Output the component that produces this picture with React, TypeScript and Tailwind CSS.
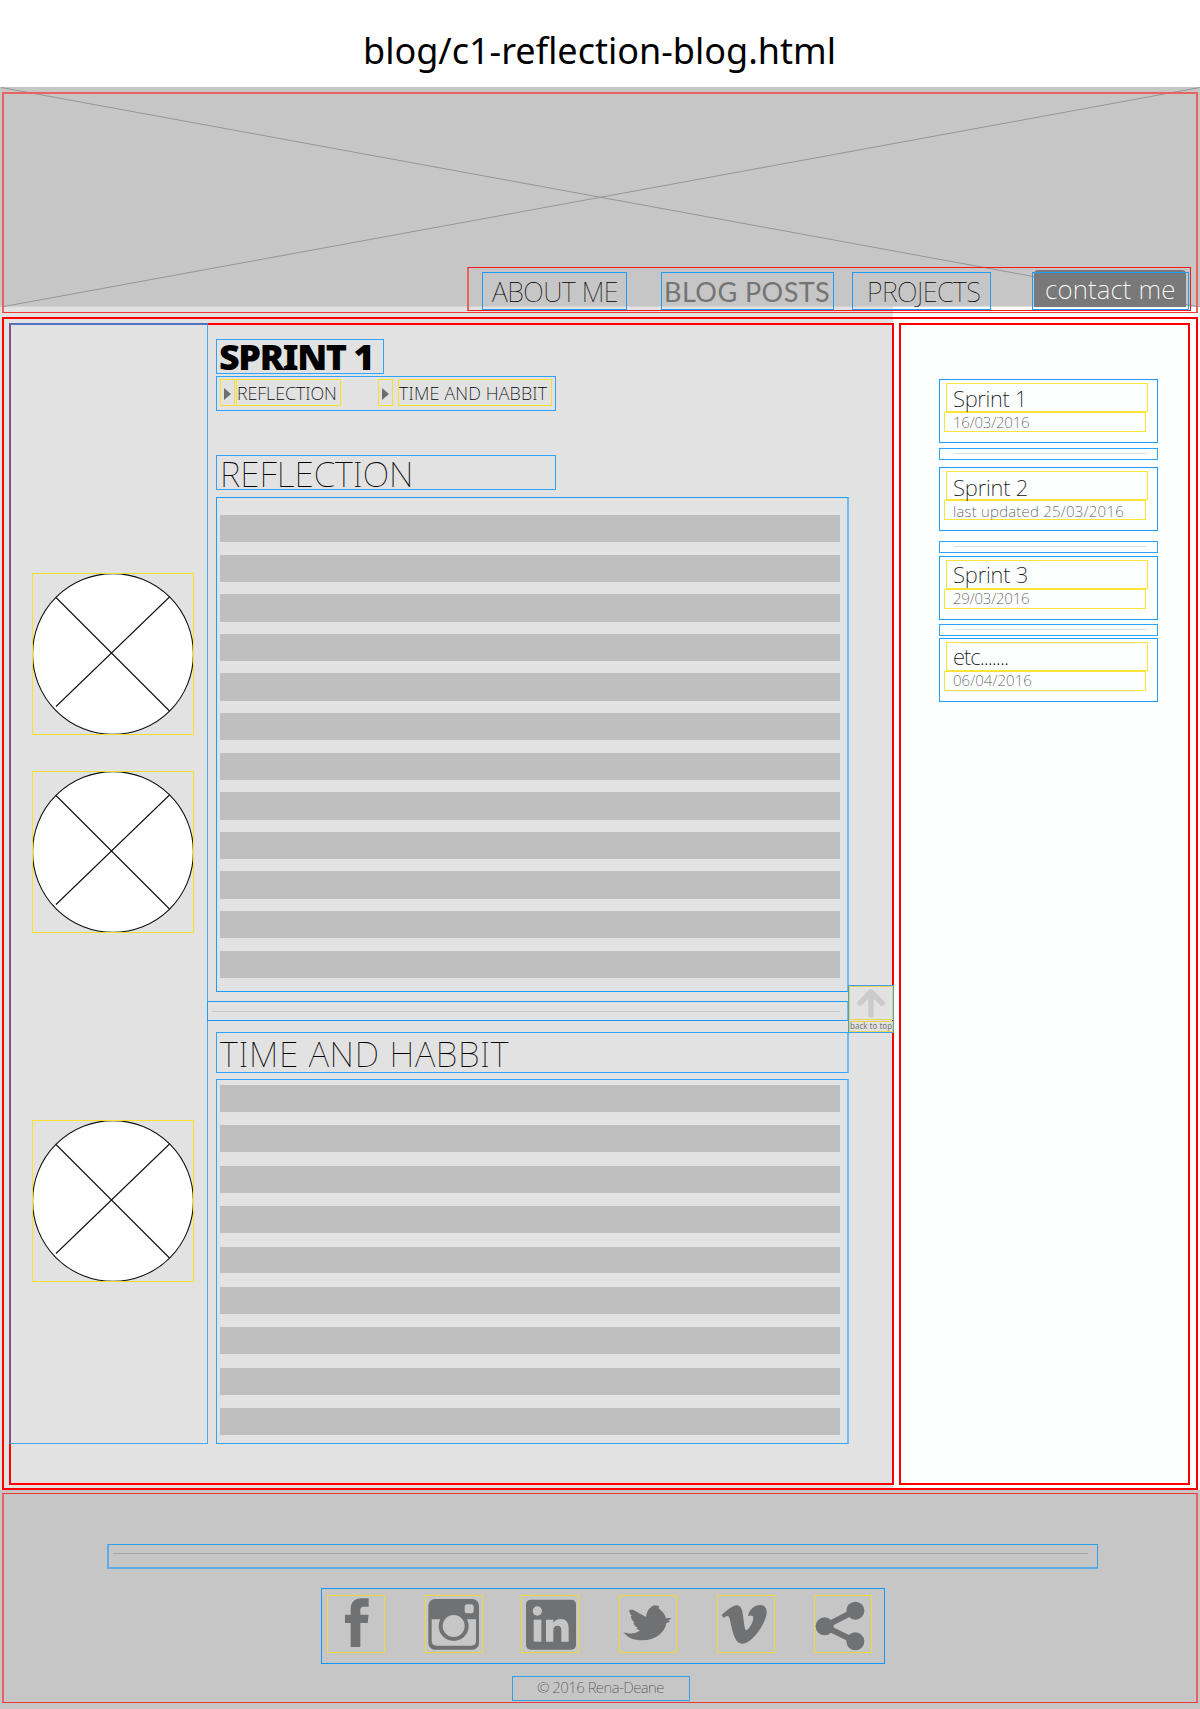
import type { ReactNode } from 'react';

const NOTO = "font-['Noto_Sans',sans-serif]";

function Bars({ count, className }: { count: number; className: string }) {
  return (
    <div className={`flex flex-col ${className}`}>
      {Array.from({ length: count }, (_, i) => (
        <div key={i} className="min-h-0 flex-1 bg-[#bfbfbf]" />
      ))}
    </div>
  );
}

function Avatar({ className }: { className: string }) {
  return (
    <div className={`relative h-[162px] w-[162px] ${className}`}>
      <svg viewBox="0 0 162 162" className="block h-full w-full" fill="none" stroke="#111" strokeWidth="1.1">
        <circle cx="81" cy="81" r="80.4" fill="#fff" />
        <path d="M24 24.5 137.5 138M24 133.5 137.5 24" />
      </svg>
      <span className="absolute inset-0 border border-[#fbe02a]" />
    </div>
  );
}

function Arrow() {
  return (
    <div className="flex h-[27px] w-[15px] items-center justify-center border border-[#fbdf2c]">
      <svg viewBox="0 0 7 12" className="mt-0.5 h-3 w-[7px]" fill="#6e6e6e">
        <path d="M0 0 7 6 0 12Z" />
      </svg>
    </div>
  );
}

type Post = { title: string; date: string; card: string; titleText: string; dateText: string; rule?: string };

const posts: Post[] = [
  { title: 'Sprint 1', date: '16/03/2016', card: 'mt-[54px]', titleText: 'pt-[3px] tracking-[-0.3px]', dateText: 'pt-[2px] tracking-[-0.2px]', rule: 'mt-[5px]' },
  { title: 'Sprint 2', date: 'last updated 25/03/2016', card: 'mt-[7px]', titleText: 'pt-[4px] tracking-[-0.15px]', dateText: 'pt-[3px] tracking-[0.25px]', rule: 'mt-[10px]' },
  { title: 'Sprint 3', date: '29/03/2016', card: 'mt-[3px]', titleText: 'pt-[2px] tracking-[-0.15px]', dateText: 'pt-[1px] tracking-[-0.2px]', rule: 'mt-[4px]' },
  { title: 'etc.......', date: '06/04/2016', card: 'mt-[2px]', titleText: 'pt-[2px] tracking-[-1px]', dateText: 'pt-[1px] tracking-[0.05px]' },
];

function PostCard({ post }: { post: Post }) {
  return (
    <>
      <div className={`h-16 w-[219px] border border-[#1f9cfa] pt-[3px] ${post.card}`}>
        <div className={`ml-1.5 h-[29px] w-[202px] border border-[#fce338] pl-[6px] text-[22px] leading-none font-extralight whitespace-nowrap text-[#111] ${post.titleText}`}>
          {post.title}
        </div>
        <div className={`ml-1 h-5 w-[202px] border border-[#fce338] pl-[8px] text-[15px] leading-none font-extralight whitespace-nowrap text-[#555] ${post.dateText}`}>
          {post.date}
        </div>
      </div>
      {post.rule && (
        <div className={`h-3 w-[219px] border border-[#2fa3fb] pt-1 ${post.rule}`}>
          <div className="ml-3.5 h-px w-[193px] bg-[#dedede]" />
        </div>
      )}
    </>
  );
}

function Social({ box, className = '', children }: { box: string; className?: string; children: ReactNode }) {
  return (
    <div className={`relative h-[58px] w-[58px] ${className}`}>
      <svg viewBox={box} className="block h-full w-full" fill="#707173">{children}</svg>
      <span className="absolute inset-0 border border-[#f0d83c]" />
    </div>
  );
}

export default function App() {
  return (
    <div className={`h-[1709px] w-[1200px] overflow-hidden bg-white text-black ${NOTO}`}>
      <div className="h-[87px] pt-[33px] pl-[363px] text-[36px] leading-none whitespace-nowrap">blog/c1-reflection-blog.html</div>

      <div className="bg-[linear-gradient(to_right,#e2e2e2_893px,#ffffff_893px)]">
        <header className="relative h-[230px] px-0.5 pt-[5px]">
          <svg viewBox="0 0 1200 219.6" className="absolute inset-x-0 top-0 h-[219.6px] w-full">
            <rect width="1200" height="219.6" fill="#c6c6c6" />
            <path d="M1 .5 1200 220M1200 .5 4 219.5" stroke="#969696" strokeWidth="1" fill="none" />
          </svg>
          <div className="relative h-[221px] border-2 border-b border-[#e46464] border-b-[#f83333] pt-[173px]">
            <nav className="ml-[463px] flex h-[44px] w-[724px] border border-l-2 border-[#f01818] border-l-[#e46464] pt-1">
              <div className="ml-[13px] h-[38px] w-[145px] border border-[#1f9cfa] pt-[5px] pl-[9px] text-[27px] leading-none font-thin tracking-[-0.45px] whitespace-nowrap">ABOUT ME</div>
              <div className="ml-[34px] h-[38px] w-[173px] border border-[#1f9cfa] pt-[5px] pl-0.5 font-['Lato',sans-serif] text-[27px] leading-none tracking-[0.45px] whitespace-nowrap text-[#747474]">BLOG POSTS</div>
              <div className="ml-[18px] h-[38px] w-[139px] border border-[#1f9cfa] pt-[5px] pl-[14px] text-[27px] leading-none font-thin tracking-[-0.5px] whitespace-nowrap">PROJECTS</div>
              <div className="relative ml-[41px] h-[38px] w-[157px] pl-0.5">
                <div className="-mt-0.5 h-[37px] w-[152px] rounded-t bg-[#797979] pt-[6px] pl-[11px] text-[26px] leading-none font-extralight tracking-[0.15px] whitespace-nowrap text-white">contact me</div>
                <span className="absolute inset-0 border border-[#1f9cfa]" />
              </div>
            </nav>
          </div>
        </header>

        <main className="mx-0.5 flex h-[1173px] gap-[5px] border-2 border-[#ff0000] pt-1 pl-[5px]">
          <section className="relative flex h-[1162px] w-[885px] border-2 border-[#ff0000]">
            <aside className="-mt-0.5 -ml-0.5 h-[1121px] w-[199px] border border-t-2 border-l-2 border-[#45a9f5] border-t-[#4d72c0] border-l-[#7f5088] pl-[21px]">
              <Avatar className="mt-[248px]" />
              <Avatar className="mt-9" />
              <Avatar className="mt-[187px]" />
            </aside>

            <div className="ml-2 flex w-[633px] flex-col">
              <h1 className="mt-[14px] h-[35px] w-[168px] border border-[#2fa3fb] pl-[2px] text-[36px] leading-[33px] font-black tracking-[-1.4px] whitespace-nowrap">SPRINT 1</h1>
              <div className="mt-0.5 flex h-[35px] w-[340px] border border-[#2fa3fb] pt-0.5 pl-[3px]">
                <Arrow />
                <div className="ml-px h-[27px] w-[105px] border border-[#fbdf2c] pt-1 text-[18px] leading-none font-extralight tracking-[-0.1px] whitespace-nowrap">REFLECTION</div>
                <div className="w-[37px]" />
                <Arrow />
                <div className="ml-[5px] h-[27px] w-[154px] border border-[#fbdf2c] pt-1 text-[18px] leading-none font-extralight tracking-[0.18px] whitespace-nowrap">TIME AND HABBIT</div>
              </div>
              <h2 className="mt-11 h-[35px] w-[340px] border border-[#2fa3fb] pl-[3px] text-[35px] leading-none font-thin whitespace-nowrap">REFLECTION</h2>
              <div className="mt-[7px] h-[495px] border border-r-2 border-[#1f9cfa] border-r-[#6fbaf0] pt-[17px] pl-[3px]">
                <Bars count={12} className="h-[463px] w-[620px] gap-[12.3px]" />
              </div>
              <div className="mt-[9px] -ml-[9px] h-5 w-[642px] border border-r-2 border-[#1f9cfa] border-r-[#6fbaf0] pt-[9px] pl-1">
                <div className="h-px w-[628px] bg-[#c8c8c8]" />
              </div>
              <h2 className="mt-[11px] h-[41px] border border-r-2 border-[#2fa3fb] border-r-[#6fbaf0] pt-[3px] pl-[3px] text-[35px] leading-none font-thin tracking-[0.7px] whitespace-nowrap">TIME AND HABBIT</h2>
              <div className="mt-[6px] h-[365px] border border-r-2 border-[#2fa3fb] border-r-[#6fbaf0] pt-[5px] pl-[3px]">
                <Bars count={9} className="h-[350px] w-[620px] gap-[13.4px]" />
              </div>
            </div>

            <div className="absolute top-[660px] left-[837px] h-[48px] w-[46px] border border-[#3f9fe8]">
              <div className="flex h-[34px] justify-center border border-[#e8d44e]">
                <svg viewBox="0 0 30 32" className="h-8 w-[30px]" fill="none" stroke="#cbcbcb" strokeWidth="5.5" strokeLinecap="round" strokeLinejoin="round">
                  <path d="M15 28V5M4 16 15 5l11 11" />
                </svg>
              </div>
              <div className="mt-px h-[11px] border border-[#e8d44e] text-center text-[8px] leading-[8px] whitespace-nowrap text-[#777]">back to top</div>
            </div>
          </section>

          <section className="flex h-[1162px] w-[291px] flex-col border-2 border-[#ff0000] bg-[#fdfefe] pl-[38px]">
            {posts.map((post) => <PostCard key={post.title} post={post} />)}
          </section>
        </main>
      </div>

      <footer className="h-[219px] bg-[#c6c6c6] px-0.5 pt-[3px]">
        <div className="h-[210px] border-2 border-y border-[#e46464] border-y-[#ee3838] pt-[50px]">
          <div className="ml-[103px] h-[25px] w-[991px] border border-b-2 border-l-2 border-[#2fa0f0] border-b-[#5fade8] border-l-[#5fade8] pt-2 pl-1">
            <div className="h-px w-[975px] bg-[#a5a5a5]" />
          </div>
          <div className="mt-[19px] ml-[317px] flex h-[76px] w-[564px] border border-[#1196fc] pt-[6px] pl-[5px]">
            <Social box="52 76 174 174">
              <path d="M123 232V160H106V135H123V120C123 98 134 86 156 86H177V111H162C154 111 152 115 152 122V135H177L174 160H152V232Z" />
            </Social>
            <Social box="345 76 174 174" className="ml-10">
              <rect x="355" y="88" width="152" height="152" rx="20" />
              <path d="M365 149H498V214Q498 228 484 228H379Q365 228 365 214Z" fill="#c6c6c6" />
              <circle cx="431" cy="169" r="45" />
              <circle cx="431" cy="169" r="33" fill="#c6c6c6" />
              <rect x="464" y="104" width="27" height="27" rx="8" fill="#c6c6c6" />
            </Social>
            <Social box="631 76 174 174" className="ml-[38px]">
              <rect x="646" y="90" width="150" height="150" rx="14" />
              <g fill="#c6c6c6">
                <circle cx="680" cy="124" r="14" />
                <rect x="669" y="150" width="23" height="66" />
                <path d="M706 150h22v9c6-8 14-11 22-11 17 0 24 10 24 30v38h-22v-34c0-9-3-14-11-14-9 0-13 5-13 15v33h-22Z" />
              </g>
            </Social>
            <Social box="55 76 174 174" className="ml-10">
              <path d="M68 187C80 205 100 212 125 212C165 212 193 188 197 160L209 156L203 153L213 145L196 146C193 135 186 126 174 116L175 109L162 107C148 110 138 125 136 142L97 120L86 120C85 128 90 135 94 139L90 140C92 150 98 157 103 158L98 159C101 168 106 172 112 173L107 176C110 180 113 181 118 182C105 193 85 194 68 187Z" />
            </Social>
            <Social box="349 76 174 174" className="ml-10">
              <path d="M363 136C378 123 395 107 408 107C420 108 424 118 426 130C430 160 432 182 437 182C444 180 458 158 458 145C458 137 450 136 442 139C446 118 462 106 478 106C492 106 499 114 498 130C496 160 455 222 425 222C405 222 398 195 391 165C387 145 386 140 380 139C376 139 372 142 369 145Z" />
            </Social>
            <Social box="642 76 174 174" className="ml-[39px]">
              <circle cx="674" cy="170" r="27" />
              <circle cx="766" cy="123" r="27" />
              <circle cx="766" cy="215" r="27" />
              <path d="M766 123 674 170 766 215" fill="none" stroke="#707173" strokeWidth="18" />
            </Social>
          </div>
          <div className="mt-3 ml-[508px] h-[25px] w-[178px] border border-[#2fa0f0] pt-[3px] pl-[24px] text-[15px] leading-none font-extralight tracking-[-0.55px] whitespace-nowrap text-[#555]">© 2016 Rena-Deane</div>
        </div>
      </footer>
    </div>
  );
}
